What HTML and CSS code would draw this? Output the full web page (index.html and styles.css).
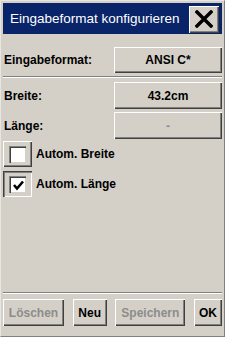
FILE: index.html
```html
<!DOCTYPE html>
<html>
<head>
<meta charset="utf-8">
<link rel="stylesheet" href="styles.css">
</head>
<body>
<div class="window">
  <div class="titlebar">
    <span class="title">Eingabeformat konfigurieren</span>
    <button class="btn close" aria-label="Schließen">
      <svg width="18" height="18" viewBox="0 0 18 18"><path d="M2 2 L16 16 M16 2 L2 16" stroke="#000" stroke-width="3.4" stroke-linecap="square"/></svg>
    </button>
  </div>
  <div class="row first">
    <span class="label">Eingabeformat:</span>
    <button class="btn field">ANSI C*</button>
  </div>
  <div class="sep"></div>
  <div class="row r2">
    <span class="label">Breite:</span>
    <button class="btn field tall">43.2cm</button>
  </div>
  <div class="row r3">
    <span class="label">Länge:</span>
    <button class="btn field tall disabled">-</button>
  </div>
  <div class="check c1">
    <span class="cbtn"><span class="cbox"></span></span>
    <span class="clabel">Autom. Breite</span>
  </div>
  <div class="check c2">
    <span class="cbtn pressed"><span class="cbox">
      <svg width="13" height="13" viewBox="0 0 13 13"><path d="M2 6 L5 9.5 L11 2.5" fill="none" stroke="#000" stroke-width="2.6"/></svg>
    </span></span>
    <span class="clabel">Autom. Länge</span>
  </div>
  <div class="spacer"></div>
  <div class="sep"></div>
  <div class="actions">
    <button class="btn act disabled w61">Löschen</button>
    <button class="btn act w34">Neu</button>
    <button class="btn act disabled w70">Speichern</button>
    <button class="btn act w28">OK</button>
  </div>
</div>
</body>
</html>
```
FILE: styles.css
```css
* { box-sizing: border-box; }
html, body { margin: 0; padding: 0; }
body {
  width: 225px;
  height: 337px;
  background: #d4d0c8;
  font-family: "Liberation Sans", Arial, sans-serif;
  overflow: hidden;
}
.window {
  width: 225px;
  height: 337px;
  border-left: 1px solid #e8e6e0;
  border-top: 1px solid #e8e6e0;
  border-right: 1px solid #808080;
  border-bottom: 1px solid #808080;
  padding: 2px 2px 0 2px;
  display: flex;
  flex-direction: column;
}
.titlebar {
  height: 31px;
  background: #0a246a;
  display: flex;
  align-items: center;
  justify-content: space-between;
  padding: 0 3px 0 7px;
}
.title {
  color: #fff;
  font-size: 13.5px;
  letter-spacing: 0;
}
.btn {
  background: #d4d0c8;
  border: none;
  margin: 0;
  padding: 0;
  font-family: "Liberation Sans", Arial, sans-serif;
  font-weight: bold;
  font-size: 12px;
  color: #000;
  box-shadow: inset 1px 1px 0 #ffffff, inset -1px -1px 0 #404040, inset -2px -2px 0 #808080;
  display: flex;
  align-items: center;
  justify-content: center;
}
.close {
  width: 30px;
  height: 27px;
  margin-top: 1px;
}
.row {
  display: flex;
  align-items: center;
  justify-content: space-between;
  padding-left: 1px;
}
.label {
  font-weight: bold;
  font-size: 12px;
  color: #000;
}
.row.first { margin-top: 13px; }
.field {
  width: 108px;
  height: 26px;
}
.field.tall { height: 27px; }
.sep {
  height: 2px;
  border-top: 1px solid #808080;
  border-bottom: 1px solid #ffffff;
  margin: 3px 0 0 0;
  flex: none;
}
.row.r2 { margin-top: 4px; }
.row.r3 { margin-top: 3px; }
.disabled { color: #8c8c8c; }
.check {
  display: flex;
  align-items: center;
}
.check.c1 { margin-top: 2px; }
.check.c2 { margin-top: 4px; }
.cbtn {
  width: 29px;
  height: 26px;
  box-shadow: inset 1px 1px 0 #ffffff, inset -1px -1px 0 #404040, inset -2px -2px 0 #808080;
  display: flex;
  align-items: center;
  justify-content: center;
}
.cbtn.pressed {
  box-shadow: inset 1px 1px 0 #404040, inset 2px 2px 0 #808080, inset -1px -1px 0 #ffffff;
}
.cbox {
  width: 17px;
  height: 17px;
  background: #fff;
  box-shadow: inset 1px 1px 0 #808080, inset 2px 2px 0 #404040, inset -1px -1px 0 #d4d0c8;
  display: flex;
  align-items: center;
  justify-content: center;
  padding: 2px 0 0 2px;
}
.clabel {
  font-weight: bold;
  font-size: 12px;
  margin-left: 4px;
}
.spacer { flex: 1; }
.actions {
  display: flex;
  justify-content: space-between;
  margin-top: 5px;
  margin-bottom: 10px;
}
.act { height: 27px; }
.w61 { width: 61px; }
.w34 { width: 34px; }
.w70 { width: 70px; }
.w28 { width: 28px; }
```
